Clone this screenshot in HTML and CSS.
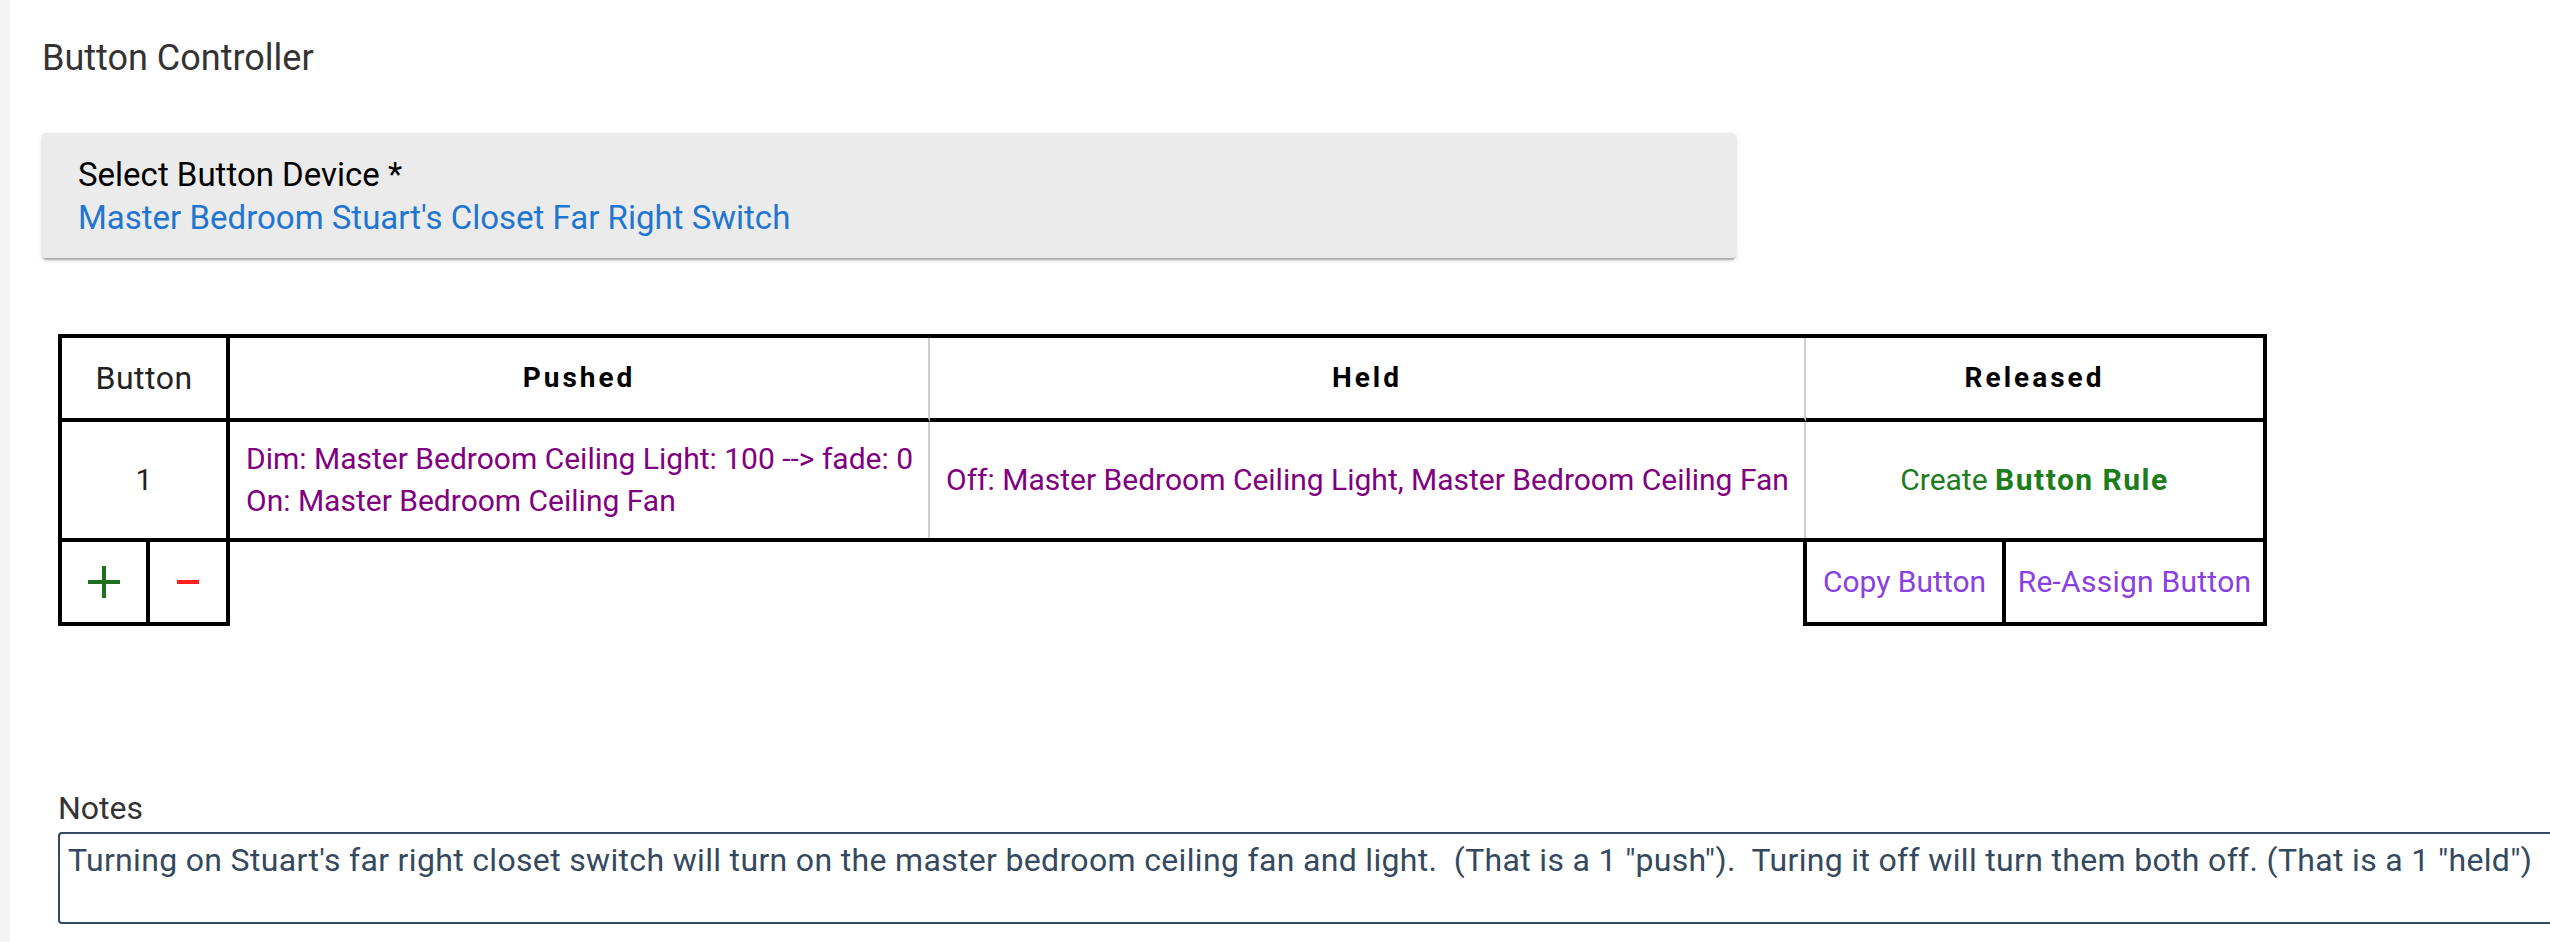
FILE: index.html
```html
<!DOCTYPE html>
<html>
<head>
<meta charset="utf-8">
<link rel="stylesheet" href="styles.css">
</head>
<body>
<div class="page">
  <div class="strip"></div>
  <main class="content">
    <h1 class="title">Button Controller</h1>
    <div class="select-card">
      <div class="select-label">Select Button Device *</div>
      <div class="select-value">Master Bedroom Stuart's Closet Far Right Switch</div>
    </div>

    <div class="table-block">
      <div class="btn-table">
        <div class="cell head col-button">Button</div>
        <div class="cell head col-pushed">Pushed</div>
        <div class="cell head col-held">Held</div>
        <div class="cell head col-released">Released</div>

        <div class="cell body col-button num">1</div>
        <div class="cell body col-pushed action">Dim: Master Bedroom Ceiling Light: 100 --&gt; fade: 0<br>On: Master Bedroom Ceiling Fan</div>
        <div class="cell body col-held action">Off: Master Bedroom Ceiling Light, Master Bedroom Ceiling Fan</div>
        <div class="cell body col-released rule">Create <b>Button Rule</b></div>
      </div>
      <div class="action-row">
        <div class="group group-left">
          <div class="act act-plus">
            <svg width="34" height="34" viewBox="0 0 34 34"><path d="M17 1V33M1 17H33" stroke="#1d701d" stroke-width="4"/></svg>
          </div>
          <div class="act act-minus">
            <svg width="22" height="4" viewBox="0 0 22 4"><path d="M0 2H22" stroke="#ff1f1f" stroke-width="4"/></svg>
          </div>
        </div>
        <div class="group group-right">
          <div class="act act-copy">Copy Button</div>
          <div class="act act-reassign">Re-Assign Button</div>
        </div>
      </div>
    </div>

    <div class="notes">
      <div class="notes-label">Notes</div>
      <div class="notes-box">Turning on Stuart's far right closet switch will turn on the master bedroom ceiling fan and light.  (That is a 1 "push").  Turing it off will turn them both off. (That is a 1 "held")</div>
    </div>
  </main>
</div>
</body>
</html>
```
FILE: styles.css
```css
html, body {
  margin: 0;
  padding: 0;
  background: #fff;
  overflow: hidden;
}
body {
  font-family: Roboto, "Liberation Sans", sans-serif;
  width: 2550px;
  height: 942px;
}
.page {
  display: flex;
  height: 942px;
  overflow: hidden;
}
.strip {
  flex: 0 0 9px;
  background: #f4f4f4;
  box-shadow: 1px 0 2px rgba(0,0,0,0.04);
}
.content {
  flex: 1 1 auto;
  padding-left: 33px;
  padding-top: 37px;
  min-width: 0;
}
.title {
  margin: 0;
  font-size: 36px;
  line-height: 42px;
  font-weight: 400;
  color: #333;
}
.select-card {
  margin-top: 54px;
  width: 1694px;
  box-sizing: border-box;
  height: 125px;
  padding: 20px 36px 19px;
  background: #ebebeb;
  border-radius: 4px;
  box-shadow: 0 4px 2px -2px rgba(0,0,0,0.2), 0 2px 2px rgba(0,0,0,0.12), 0 2px 6px rgba(0,0,0,0.10);
}
.select-label {
  font-size: 33px;
  line-height: 43px;
  color: #000;
}
.select-value {
  font-size: 33px;
  line-height: 43px;
  color: #1f76d0;
}
.table-block {
  margin-top: 76px;
  margin-left: 16px;
  width: 2209px;
}
.btn-table {
  display: grid;
  grid-template-columns: 168px 700px 876px 457px;
  grid-template-rows: 84px 116px;
  border: 4px solid #000;
}
.cell {
  display: flex;
  align-items: center;
  justify-content: center;
  box-sizing: border-box;
}
.head {
  border-bottom: 4px solid #000;
  font-size: 28px;
  line-height: 40px;
  font-weight: 700;
  letter-spacing: 3px;
  color: #000;
}
.head.col-button {
  font-size: 32px;
  font-weight: 400;
  letter-spacing: 0.5px;
  color: #222;
}
.col-button {
  border-right: 4px solid #000;
}
.col-pushed, .col-held {
  border-right: 2px solid #cfcfcf;
}
.body {
  font-size: 30px;
  line-height: 42px;
}
.num {
  color: #222;
}
.action {
  color: #800080;
  justify-content: flex-start;
  padding-left: 16px;
}
.rule {
  color: #1b7d1b;
  white-space: pre;
}
.rule b {
  font-weight: 700;
  letter-spacing: 1.5px;
}
.action-row {
  display: flex;
  justify-content: space-between;
  height: 84px;
}
.group {
  display: flex;
  border: 4px solid #000;
  border-top: none;
  box-sizing: border-box;
}
.group-left {
  width: 172px;
}
.group-right {
  width: 464px;
}
.act {
  display: flex;
  align-items: center;
  justify-content: center;
  font-size: 30px;
  line-height: 42px;
  color: #8a3fe3;
}
.act-plus {
  width: 84px;
  border-right: 4px solid #000;
}
.act-minus {
  flex: 1;
}
.act-copy {
  width: 195px;
  border-right: 4px solid #000;
}
.act-reassign {
  flex: 1;
  letter-spacing: 0.25px;
}
.notes {
  margin-top: 163px;
  margin-left: 16px;
}
.notes-label {
  font-size: 32px;
  line-height: 38px;
  color: #333;
}
.notes-box {
  margin-top: 5px;
  width: 2580px;
  height: 92px;
  box-sizing: border-box;
  border: 2px solid #344861;
  border-radius: 4px;
  padding: 5px 8px;
  font-size: 32px;
  letter-spacing: 0.33px;
  line-height: 42px;
  color: #34495e;
  white-space: pre;
}
```
